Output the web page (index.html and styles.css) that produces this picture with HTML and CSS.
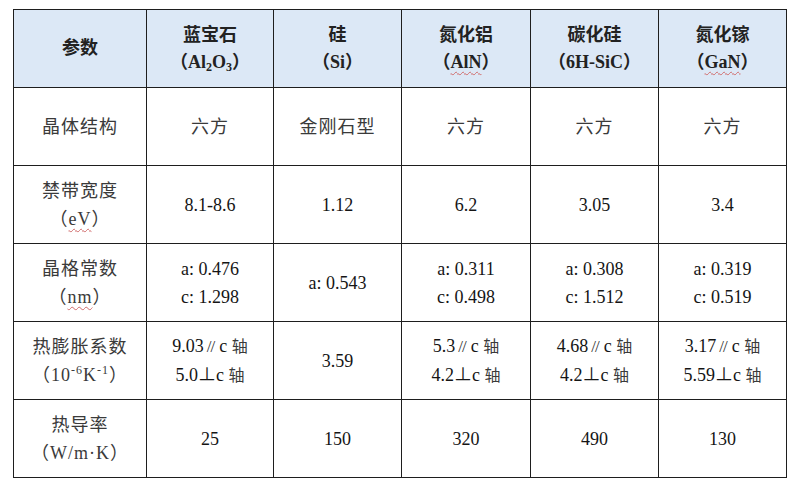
FILE: index.html
```html
<!DOCTYPE html>
<html>
<head>
<meta charset="utf-8">
<link rel="stylesheet" href="styles.css">
</head>
<body>
<table class="props">
  <colgroup>
    <col class="c0"><col class="c1"><col class="c2"><col class="c3"><col class="c4"><col class="c5">
  </colgroup>
  <thead>
    <tr>
      <th>参数</th>
      <th>蓝宝石<br>（Al<sub>2</sub>O<sub>3</sub>）</th>
      <th>硅<br>（Si）</th>
      <th>氮化铝<br>（<span class="sp">AlN</span>）</th>
      <th>碳化硅<br>（6H-SiC）</th>
      <th>氮化镓<br>（<span class="sp">GaN</span>）</th>
    </tr>
  </thead>
  <tbody>
    <tr>
      <td class="lbl">晶体结构</td>
      <td class="cj">六方</td>
      <td class="cj">金刚石型</td>
      <td class="cj">六方</td>
      <td class="cj">六方</td>
      <td class="cj">六方</td>
    </tr>
    <tr>
      <td class="lbl">禁带宽度<br>（<span class="sp">eV</span>）</td>
      <td>8.1-8.6</td>
      <td>1.12</td>
      <td>6.2</td>
      <td>3.05</td>
      <td>3.4</td>
    </tr>
    <tr>
      <td class="lbl">晶格常数<br>（<span class="sp">nm</span>）</td>
      <td>a: 0.476<br>c: 1.298</td>
      <td>a: 0.543</td>
      <td>a: 0.311<br>c: 0.498</td>
      <td>a: 0.308<br>c: 1.512</td>
      <td>a: 0.319<br>c: 0.519</td>
    </tr>
    <tr>
      <td class="lbl">热膨胀系数<br>（10<sup>-6</sup>K<sup>-1</sup>）</td>
      <td>9.03<span class="par">//</span>c <span class="ax">轴</span><br>5.0<span class="perp">⊥</span>c <span class="ax">轴</span></td>
      <td>3.59</td>
      <td>5.3<span class="par">//</span>c <span class="ax">轴</span><br>4.2<span class="perp">⊥</span>c <span class="ax">轴</span></td>
      <td>4.68<span class="par">//</span>c <span class="ax">轴</span><br>4.2<span class="perp">⊥</span>c <span class="ax">轴</span></td>
      <td>3.17<span class="par">//</span>c <span class="ax">轴</span><br>5.59<span class="perp">⊥</span>c <span class="ax">轴</span></td>
    </tr>
    <tr>
      <td class="lbl">热导率<br>（W/m·K）</td>
      <td>25</td>
      <td>150</td>
      <td>320</td>
      <td>490</td>
      <td>130</td>
    </tr>
  </tbody>
</table>
</body>
</html>
```

FILE: styles.css
```css
html, body {
  margin: 0;
  padding: 0;
  background: #ffffff;
}
body {
  padding: 9px 0 0 13px;
  font-family: "Liberation Serif", "Noto Sans CJK SC", serif;
  font-size: 18px;
  color: #151515;
}
.props {
  border-collapse: collapse;
  table-layout: fixed;
  width: 774px;
}
.c0 { width: 133px; }
.c1 { width: 127px; }
.c2 { width: 128px; }
.c3 { width: 129px; }
.c4 { width: 128px; }
.c5 { width: 128px; }
.props th, .props td {
  border: 1px solid #1e1e1e;
  height: 77px;
  padding: 0;
  text-align: center;
  vertical-align: middle;
  line-height: 28px;
}
.props th {
  background: #dce8f6;
  font-weight: bold;
  color: #222;
  line-height: 27px;
}
.props td.lbl, .props td.cj {
  color: #3a3a3a;
}
.lbl {
  letter-spacing: 1px;
}
.cj {
  letter-spacing: 1px;
}
.sp {
  text-decoration: underline wavy #d06a6a 1px;
  text-underline-offset: 3px;
}
sub, sup {
  font-size: 12px;
  line-height: 0;
}
sub { vertical-align: -3px; }
sup { vertical-align: 7px; }
.par {
  letter-spacing: -1px;
  margin: 0 5px 0 3px;
  font-size: 17px;
  color: #333;
}
.perp {
  margin: 0;
}
.ax {
  font-size: 16px;
  color: #3a3a3a;
}
```
